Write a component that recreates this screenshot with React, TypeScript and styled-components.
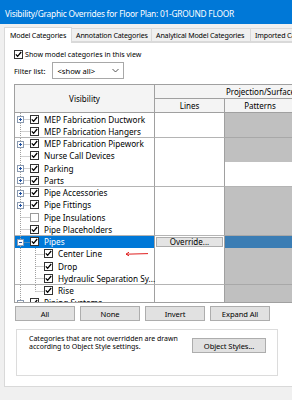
import React from 'react';
import styled, { createGlobalStyle } from 'styled-components';

// Global
const GlobalStyle = createGlobalStyle`
  html, body {
    margin: 0;
    padding: 0;
    background: #f0f0f0;
  }
  body {
    font-family: "Noto Sans", "Open Sans", sans-serif;
    color: #000;
  }
`;

// Styles
const Dialog = styled.div`
  width: 292px;
  height: 400px;
  overflow: hidden;
  background: #f0f0f0;
  display: flex;
  flex-direction: column;
`;

const TitleBar = styled.div`
  height: 24px;
  flex: none;
  background: #0078d7;
  color: #fff;
  font-size: 8.4px;
  letter-spacing: -0.25px;
  display: flex;
  align-items: center;
  padding: 2px 0 0 5px;
  box-sizing: border-box;
  white-space: nowrap;
`;

const Body = styled.div`
  padding: 3px 0 0 4px;
`;

const TabStrip = styled.div`
  display: flex;
  align-items: flex-end;
  height: 15px;
  position: relative;
  z-index: 1;
`;

const Tab = styled.div<{ $active?: boolean; $w: number }>`
  flex: none;
  width: ${(p) => p.$w}px;
  box-sizing: border-box;
  height: ${(p) => (p.$active ? '16px' : '14px')};
  margin-bottom: ${(p) => (p.$active ? '-1px' : '0')};
  padding: 0 0 0 ${(p) => (p.$active ? '5px' : '4px')};
  font-size: 7.1px;
  letter-spacing: -0.15px;
  line-height: ${(p) => (p.$active ? '15px' : '13px')};
  background: ${(p) => (p.$active ? '#fff' : '#f0f0f0')};
  border: 1px solid #d9d9d9;
  border-bottom: ${(p) => (p.$active ? 'none' : '1px solid #d9d9d9')};
  margin-left: ${(p) => (p.$active ? '0' : '-1px')};
  white-space: nowrap;
  overflow: hidden;
`;

const TabPanel = styled.div`
  height: 345px;
  background: #fff;
  border: 1px solid #d9d9d9;
  border-right: none;
  box-sizing: border-box;
  padding: 6px 0 0 9px;
  overflow: hidden;
  display: flex;
  flex-direction: column;
`;

const CheckRow = styled.label`
  display: flex;
  align-items: center;
  gap: 2px;
  font-size: 7.1px;
  height: 10px;
`;

const FilterRow = styled.div`
  display: flex;
  align-items: center;
  gap: 7px;
  margin-top: 3px;
  font-size: 7.4px;
  height: 17px;
`;

const Dropdown = styled.div`
  width: 72px;
  height: 17px;
  box-sizing: border-box;
  border: 1px solid #a8a8a8;
  background: #fff;
  display: flex;
  align-items: center;
  justify-content: space-between;
  padding: 0 4px 0 4px;
  font-size: 7.6px;
`;

const Table = styled.div`
  margin-top: 5px;
  width: 420px;
  height: 219px;
  box-sizing: border-box;
  border: 1px solid #a0a0a0;
  border-right: none;
  overflow: hidden;
  flex: none;
`;

const COLUMNS = '140px 70px 71px 71px 70px';

const HeaderGrid = styled.div`
  display: grid;
  grid-template-columns: ${COLUMNS};
  grid-template-rows: 14px 14px;
  background: #f4f4f4;
`;

const HeaderCell = styled.div<{ $col: string; $row: string }>`
  grid-column: ${(p) => p.$col};
  grid-row: ${(p) => p.$row};
  box-sizing: border-box;
  border-right: 1px solid #a0a0a0;
  border-bottom: 1px solid #a0a0a0;
  display: flex;
  align-items: center;
  justify-content: center;
  font-size: 8px;
  white-space: nowrap;
  overflow: hidden;
`;

const Row = styled.div`
  display: grid;
  grid-template-columns: ${COLUMNS};
  height: 12.27px;
`;

const NameCell = styled.div<{ $selected?: boolean }>`
  position: relative;
  box-sizing: border-box;
  border-right: 1px solid #a0a0a0;
  border-bottom: 1px solid #b4b4b4;
  display: flex;
  align-items: center;
  font-size: 8.2px;
  white-space: nowrap;
  background: ${(p) => (p.$selected ? '#0078d7' : '#fff')};
  color: ${(p) => (p.$selected ? '#fff' : '#000')};
`;

const ValueCell = styled.div<{ $gray?: boolean; $selected?: boolean }>`
  box-sizing: border-box;
  border-right: 1px solid ${(p) => (p.$gray ? '#a8a8a8' : '#a0a0a0')};
  border-bottom: 1px solid ${(p) => (p.$gray ? '#a8a8a8' : '#b4b4b4')};
  background: ${(p) => (p.$selected ? '#3b7db4' : p.$gray ? '#c0c0c0' : '#fff')};
  display: flex;
  align-items: center;
  justify-content: center;
  padding: 0 1px;
`;

const Label = styled.span`
  margin-left: 5px;
`;

const Box = styled.span<{ $off?: boolean }>`
  flex: none;
  width: 9px;
  height: 9px;
  box-sizing: border-box;
  border: 1px solid ${(p) => (p.$off ? '#9a9a9a' : '#333')};
  background: #fff;
  display: flex;
  align-items: center;
  justify-content: center;
`;

const Arrow = styled.svg`
  position: absolute;
  left: 110px;
  top: 2px;
`;

const OverrideButton = styled.div`
  width: 100%;
  height: 10px;
  box-sizing: border-box;
  background: #e4e4e4;
  border: 1px solid #adadad;
  font-size: 8px;
  line-height: 8px;
  text-align: center;
  color: #000;
`;

const ButtonRow = styled.div`
  display: flex;
  gap: 5px;
  margin-top: 3px;
  padding-left: 1px;
`;

const Button = styled.div<{ $w?: number }>`
  width: ${(p) => p.$w || 60}px;
  height: 15px;
  box-sizing: border-box;
  background: #e1e1e1;
  border: 1px solid #adadad;
  font-size: 7.6px;
  letter-spacing: -0.1px;
  display: flex;
  align-items: center;
  justify-content: center;
  white-space: nowrap;
`;

const NoteBox = styled.div`
  margin: 8px 0 0 2px;
  width: 262px;
  height: 47px;
  box-sizing: border-box;
  border: 1px solid #dcdcdc;
  display: flex;
  align-items: flex-start;
  justify-content: space-between;
  padding: 5px 11px 0 12px;
`;

const NoteText = styled.div`
  font-size: 7px;
  line-height: 8.2px;
`;

const NoteButton = styled(Button)`
  margin-top: 3px;
`;

// Drawings
const Check = () => (
  <svg width="7" height="7" viewBox="0 0 7 7">
    <path d="M0.8 3.4 L2.6 5.3 L6.2 1" fill="none" stroke="#000" strokeWidth="1.3" />
  </svg>
);

const Chevron = () => (
  <svg width="7" height="5" viewBox="0 0 7 5">
    <path d="M0.5 1 L3.5 4 L6.5 1" fill="none" stroke="#444" strokeWidth="0.9" />
  </svg>
);

type Expander = 'plus' | 'minus' | null;

const TreeGlyph = ({ level, expander, last }: { level: number; expander: Expander; last?: boolean }) => {
  const w = level === 0 ? 15 : 29;
  const h = 12;
  const dot = { stroke: '#a0a0a0', strokeWidth: 1, strokeDasharray: '1 1' };
  return (
    <svg width={w} height={h} viewBox={`0 0 ${w} ${h}`} style={{ flex: 'none' }}>
      <line x1="5.5" y1="0" x2="5.5" y2={h} {...dot} />
      {level === 0 && <line x1="5.5" y1="6.5" x2="15" y2="6.5" {...dot} />}
      {level === 1 && (
        <>
          <line x1="20.5" y1="0" x2="20.5" y2={last ? 6.5 : h} {...dot} />
          <line x1="20.5" y1="6.5" x2="29" y2="6.5" {...dot} />
        </>
      )}
      {expander && (
        <>
          <rect x="2.5" y="3.5" width="6" height="6" fill="#fff" stroke="#8a9ab0" strokeWidth="1" />
          <line x1="4" y1="6.5" x2="7" y2="6.5" stroke="#2050a0" strokeWidth="1" />
          {expander === 'plus' && <line x1="5.5" y1="5" x2="5.5" y2="8" stroke="#2050a0" strokeWidth="1" />}
        </>
      )}
    </svg>
  );
};

// Data
interface Category {
  name: string;
  level: number;
  expander: Expander;
  checked: boolean;
  gray: boolean;
  selected?: boolean;
  arrow?: boolean;
  last?: boolean;
}

const categories: Category[] = [
  { name: 'MEP Fabrication Ductwork', level: 0, expander: 'plus', checked: true, gray: true },
  { name: 'MEP Fabrication Hangers', level: 0, expander: null, checked: true, gray: true },
  { name: 'MEP Fabrication Pipework', level: 0, expander: 'plus', checked: true, gray: true },
  { name: 'Nurse Call Devices', level: 0, expander: null, checked: true, gray: true },
  { name: 'Parking', level: 0, expander: 'plus', checked: true, gray: false },
  { name: 'Parts', level: 0, expander: 'plus', checked: true, gray: false },
  { name: 'Pipe Accessories', level: 0, expander: 'plus', checked: true, gray: true },
  { name: 'Pipe Fittings', level: 0, expander: 'plus', checked: true, gray: true },
  { name: 'Pipe Insulations', level: 0, expander: null, checked: false, gray: true },
  { name: 'Pipe Placeholders', level: 0, expander: null, checked: true, gray: true },
  { name: 'Pipes', level: 0, expander: 'minus', checked: true, gray: true, selected: true },
  { name: 'Center Line', level: 1, expander: null, checked: true, gray: true, arrow: true },
  { name: 'Drop', level: 1, expander: null, checked: true, gray: true },
  { name: 'Hydraulic Separation Sy...', level: 1, expander: null, checked: true, gray: true },
  { name: 'Rise', level: 1, expander: null, checked: true, gray: true, last: true },
  { name: 'Piping Systems', level: 0, expander: 'plus', checked: true, gray: true },
];

const tabs = [
  { label: 'Model Categories', w: 68 },
  { label: 'Annotation Categories', w: 81 },
  { label: 'Analytical Model Categories', w: 100 },
  { label: 'Imported Categories', w: 80 },
];

// Main component
const App = () => {
  return (
    <>
      <GlobalStyle />
      <Dialog>
        <TitleBar>Visibility/Graphic Overrides for Floor Plan: 01-GROUND FLOOR</TitleBar>
        <Body>
          <TabStrip>
            {tabs.map((t, i) => (
              <Tab key={t.label} $active={i === 0} $w={t.w}>
                {t.label}
              </Tab>
            ))}
          </TabStrip>
          <TabPanel>
            <CheckRow>
              <Box>
                <Check />
              </Box>
              Show model categories in this view
            </CheckRow>
            <FilterRow>
              Filter list:
              <Dropdown>
                &lt;show all&gt;
                <Chevron />
              </Dropdown>
            </FilterRow>

            <Table>
              <HeaderGrid>
                <HeaderCell $col="1" $row="1 / 3">Visibility</HeaderCell>
                <HeaderCell $col="2 / 5" $row="1">Projection/Surface</HeaderCell>
                <HeaderCell $col="5" $row="1">Cut</HeaderCell>
                <HeaderCell $col="2" $row="2">Lines</HeaderCell>
                <HeaderCell $col="3" $row="2">Patterns</HeaderCell>
                <HeaderCell $col="4" $row="2">Transparency</HeaderCell>
                <HeaderCell $col="5" $row="2">Lines</HeaderCell>
              </HeaderGrid>
              {categories.map((c) => (
                <Row key={c.name}>
                  <NameCell $selected={c.selected}>
                    <TreeGlyph level={c.level} expander={c.expander} last={c.last} />
                    <Box $off={!c.checked}>{c.checked && <Check />}</Box>
                    <Label>{c.name}</Label>
                    {c.arrow && (
                      <Arrow width="24" height="8" viewBox="0 0 24 8">
                        <path d="M1 4.2 L23 3.6" stroke="#e02020" strokeWidth="1" fill="none" />
                        <path d="M4 2.2 L1 4.2 L4 5.8" stroke="#e02020" strokeWidth="1" fill="none" />
                      </Arrow>
                    )}
                  </NameCell>
                  <ValueCell>{c.selected && <OverrideButton>Override...</OverrideButton>}</ValueCell>
                  <ValueCell $gray={c.gray} $selected={c.selected} />
                  <ValueCell $gray={c.gray} $selected={c.selected} />
                  <ValueCell />
                </Row>
              ))}
            </Table>

            <ButtonRow>
              <Button>All</Button>
              <Button>None</Button>
              <Button>Invert</Button>
              <Button>Expand All</Button>
            </ButtonRow>

            <NoteBox>
              <NoteText>
                Categories that are not overridden are drawn
                <br />
                according to Object Style settings.
              </NoteText>
              <NoteButton $w={74}>Object Styles...</NoteButton>
            </NoteBox>
          </TabPanel>
        </Body>
      </Dialog>
    </>
  );
};

export default App;
